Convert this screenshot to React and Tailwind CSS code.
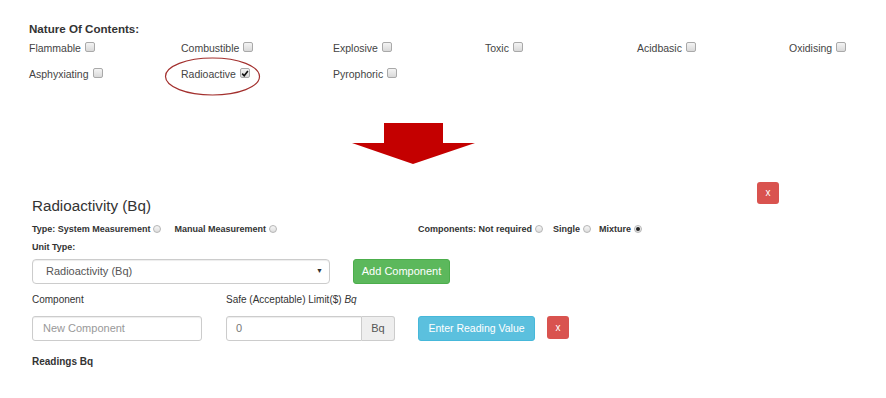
import React from 'react';

const font = { fontFamily: '"Liberation Sans", Arial, Helvetica, sans-serif' };

function Box({ checked }) {
    return (
        <span className="ml-[4px] inline-flex h-[10px] w-[10px] -translate-y-[2px] items-center justify-center rounded-[2px] border border-[#a9a9a9] bg-gradient-to-b from-[#f4f4f4] to-[#d9d9d9]">
            {checked && (
                <svg width="9" height="9" viewBox="0 0 10 10">
                    <path d="M1.5 5.2 L4 7.8 L8.6 1.8" fill="none" stroke="#111" strokeWidth="2" />
                </svg>
            )}
        </span>
    );
}

function Radio({ checked }) {
    return (
        <span className="ml-[3px] inline-flex h-[8px] w-[8px] -translate-y-[1px] items-center justify-center rounded-full border border-[#b5b5b5] bg-gradient-to-b from-[#f6f6f6] to-[#dedede]">
            {checked && <span className="h-[4px] w-[4px] rounded-full bg-[#222]" />}
        </span>
    );
}

const contents = [
    ['Flammable', false],
    ['Combustible', false],
    ['Explosive', false],
    ['Toxic', false],
    ['Acidbasic', false],
    ['Oxidising', false],
    ['Asphyxiating', false],
    ['Radioactive', true],
    ['Pyrophoric', false],
];

function App() {
    return (
        <div className="min-h-[398px] w-[886px] bg-white text-[#333]" style={font}>
            {/* nature of contents */}
            <div className="relative pl-[29px] pt-[22px]">
                <div className="text-[11.6px] font-bold leading-[14px]">Nature Of Contents:</div>
                <div className="grid grid-cols-[152px_152px_152px_152px_152px_auto]">
                    {contents.map(([name, checked]) => (
                        <div key={name} className="flex h-[26px] items-center text-[10.5px] text-[#444]">
                            {name}
                            <Box checked={checked} />
                        </div>
                    ))}
                </div>
                <svg className="absolute left-[164px] top-[57px]" width="97" height="39" viewBox="0 0 97 39">
                    <ellipse cx="48.5" cy="19.5" rx="47" ry="18.5" fill="none" stroke="#a3302e" strokeWidth="1.2" />
                </svg>
            </div>

            {/* arrow */}
            <div className="ml-[352px] mt-[35px]">
                <svg width="124" height="42" viewBox="0 0 124 42">
                    <polygon points="32,0 91,0 91,20 123,20 61,41 0,20 32,20" fill="#c40000" />
                </svg>
            </div>

            {/* radioactivity form */}
            <div className="ml-[32px] mt-[17px] w-[747px]">
                <div className="flex items-start justify-between">
                    <div className="pt-[15px] text-[15.2px] leading-[18px] text-[#333]">Radioactivity (Bq)</div>
                    <button className="h-[22px] w-[22px] rounded-[3px] bg-[#d9534f] text-[10px] leading-none text-white">x</button>
                </div>

                <div className="mt-[9px] flex h-[12px] items-center text-[9px] font-bold">
                    <div className="flex w-[386px] items-center">
                        <span>Type: System Measurement</span>
                        <Radio />
                        <span className="ml-[13px]">Manual Measurement</span>
                        <Radio />
                    </div>
                    <span>Components: Not required</span>
                    <Radio />
                    <span className="ml-[10px]">Single</span>
                    <Radio />
                    <span className="ml-[8px]">Mixture</span>
                    <Radio checked />
                </div>

                <div className="mt-[5px] text-[9px] font-bold leading-[12px]">Unit Type:</div>

                <div className="mt-[6px] flex items-center gap-[23px]">
                    <div className="flex h-[25px] w-[298px] items-center justify-between rounded-[4px] border border-[#ccc] pl-[13px] pr-[6px] text-[11px] text-[#555] shadow-[inset_0_1px_1px_rgba(0,0,0,0.075)]">
                        <span>Radioactivity (Bq)</span>
                        <span className="text-[7px] text-[#333]">▼</span>
                    </div>
                    <button className="h-[25px] w-[97px] rounded-[3px] border border-[#4cae4c] bg-[#5cb85c] text-[11px] text-white">Add Component</button>
                </div>

                <div className="mt-[10px] flex text-[10px] leading-[12px]">
                    <div className="w-[194px]">Component</div>
                    <div>Safe (Acceptable) Limit($) <i>Bq</i></div>
                </div>

                <div className="mt-[10px] flex items-center">
                    <div className="flex h-[25px] w-[170px] items-center rounded-[3px] border border-[#ccc] pl-[10px] text-[11px] text-[#999] shadow-[inset_0_1px_1px_rgba(0,0,0,0.075)]">
                        New Component
                    </div>
                    <div className="ml-[24px] flex h-[25px]">
                        <div className="flex w-[136px] items-center rounded-l-[3px] border border-[#ccc] pl-[9px] text-[11px] text-[#777] shadow-[inset_0_1px_1px_rgba(0,0,0,0.075)]">0</div>
                        <div className="flex w-[33px] items-center justify-center rounded-r-[3px] border border-l-0 border-[#ccc] bg-[#eee] text-[11px] text-[#555]">Bq</div>
                    </div>
                    <button className="ml-[23px] h-[25px] w-[117px] rounded-[3px] border border-[#46b8da] bg-[#5bc0de] text-[10.5px] text-white">Enter Reading Value</button>
                    <button className="ml-[12px] h-[23px] w-[22px] -translate-y-[1px] rounded-[3px] bg-[#d9534f] text-[10px] leading-none text-white">x</button>
                </div>

                <div className="mt-[15px] text-[10px] font-bold leading-[12px]">Readings Bq</div>
            </div>
        </div>
    );
}

export default App;
